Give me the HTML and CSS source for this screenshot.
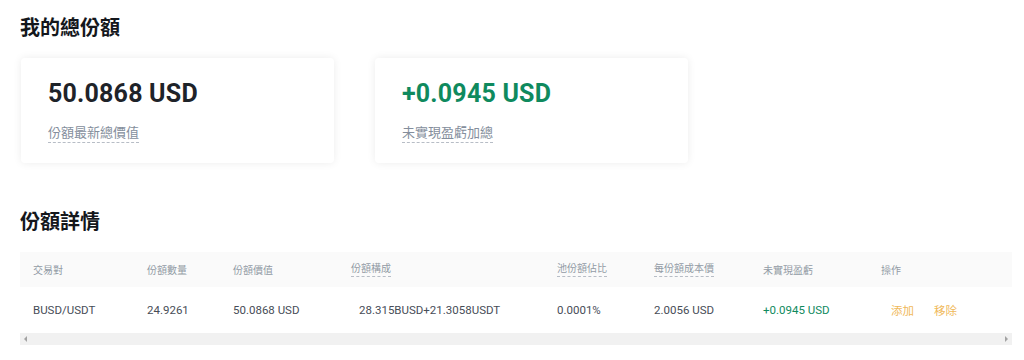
FILE: index.html
```html
<!DOCTYPE html>
<html lang="zh-Hant">
<head>
<meta charset="utf-8">
<title>我的總份額</title>
<link rel="stylesheet" href="styles.css">
</head>
<body>
<main class="page">
  <h2 class="section-title">我的總份額</h2>
  <div class="cards">
    <div class="card">
      <div class="card-value">50.0868 USD</div>
      <div class="card-label"><span class="dashed">份額最新總價值</span></div>
    </div>
    <div class="card">
      <div class="card-value green">+0.0945 USD</div>
      <div class="card-label"><span class="dashed">未實現盈虧加總</span></div>
    </div>
  </div>

  <h2 class="section-title second">份額詳情</h2>
  <div class="table">
    <div class="row head">
      <div class="cell">交易對</div>
      <div class="cell">份額數量</div>
      <div class="cell">份額價值</div>
      <div class="cell"><span class="dashed">份額構成</span></div>
      <div class="cell"><span class="dashed">池份額佔比</span></div>
      <div class="cell"><span class="dashed">每份額成本價</span></div>
      <div class="cell">未實現盈虧</div>
      <div class="cell">操作</div>
    </div>
    <div class="row body">
      <div class="cell">BUSD/USDT</div>
      <div class="cell">24.9261</div>
      <div class="cell">50.0868 USD</div>
      <div class="cell composition">28.315BUSD+21.3058USDT</div>
      <div class="cell">0.0001%</div>
      <div class="cell">2.0056 USD</div>
      <div class="cell green">+0.0945 USD</div>
      <div class="cell actions"><a class="action">添加</a><a class="action">移除</a></div>
    </div>
    <div class="scrollbar">
      <span class="arrow left"></span>
      <span class="arrow right"></span>
    </div>
  </div>
</main>
</body>
</html>
```

FILE: styles.css
```css
* { box-sizing: border-box; }
html, body { margin: 0; padding: 0; background: #ffffff; }
body {
  font-family: "Roboto", "Noto Sans CJK TC", "Noto Sans", sans-serif;
  color: #1e2329;
}
.page {
  padding: 14px 12px 0 20px;
}
.section-title {
  margin: 0;
  font-size: 20px;
  line-height: 28px;
  font-weight: 700;
  color: #14171c;
}
.section-title.second {
  margin-top: 45px;
}
.cards {
  display: flex;
  gap: 41px;
  margin-top: 16px;
  padding-left: 1px;
}
.card {
  width: 313px;
  height: 105px;
  padding: 20px 27px 0 27px;
  background: #fff;
  border-radius: 4px;
  box-shadow: 0 0 8px rgba(0, 0, 0, 0.08);
}
.card-value {
  font-size: 25px;
  line-height: 32px;
  font-weight: 700;
  letter-spacing: 0.2px;
  color: #1e2329;
}
.card-value.green { color: #0f8a5e; }
.card-label {
  margin-top: 13px;
  font-size: 13px;
  line-height: 19px;
  color: #848e9c;
}
.dashed {
  display: inline-block;
  border-bottom: 1px dashed #b7bdc6;
}
.table {
  margin-top: 16px;
  width: 992px;
}
.row {
  display: grid;
  grid-template-columns: 114px 86px 118px 206px 97px 109px 118px 1fr;
  align-items: center;
  padding-left: 13px;
}
.row.head {
  height: 35px;
  background: #fafafa;
  font-size: 10px;
  color: #929aa5;
}
.row.head .dashed { line-height: 14px; }
.row.body {
  height: 46px;
  font-size: 11.5px;
  color: #474d57;
}
.cell { white-space: nowrap; }
.composition { padding-left: 8px; }
.green { color: #0f8a5e; }
.actions {
  display: flex;
  gap: 20px;
  padding-left: 10px;
}
.action {
  color: #f0b95a;
  cursor: pointer;
}
.scrollbar {
  height: 12px;
  background: #f1f1f1;
  display: flex;
  justify-content: space-between;
  align-items: center;
  padding: 0 4px;
}
.arrow {
  width: 0;
  height: 0;
  border-top: 3px solid transparent;
  border-bottom: 3px solid transparent;
}
.arrow.left { border-right: 3px solid #a3a3a3; }
.arrow.right { border-left: 3px solid #a3a3a3; }
```
